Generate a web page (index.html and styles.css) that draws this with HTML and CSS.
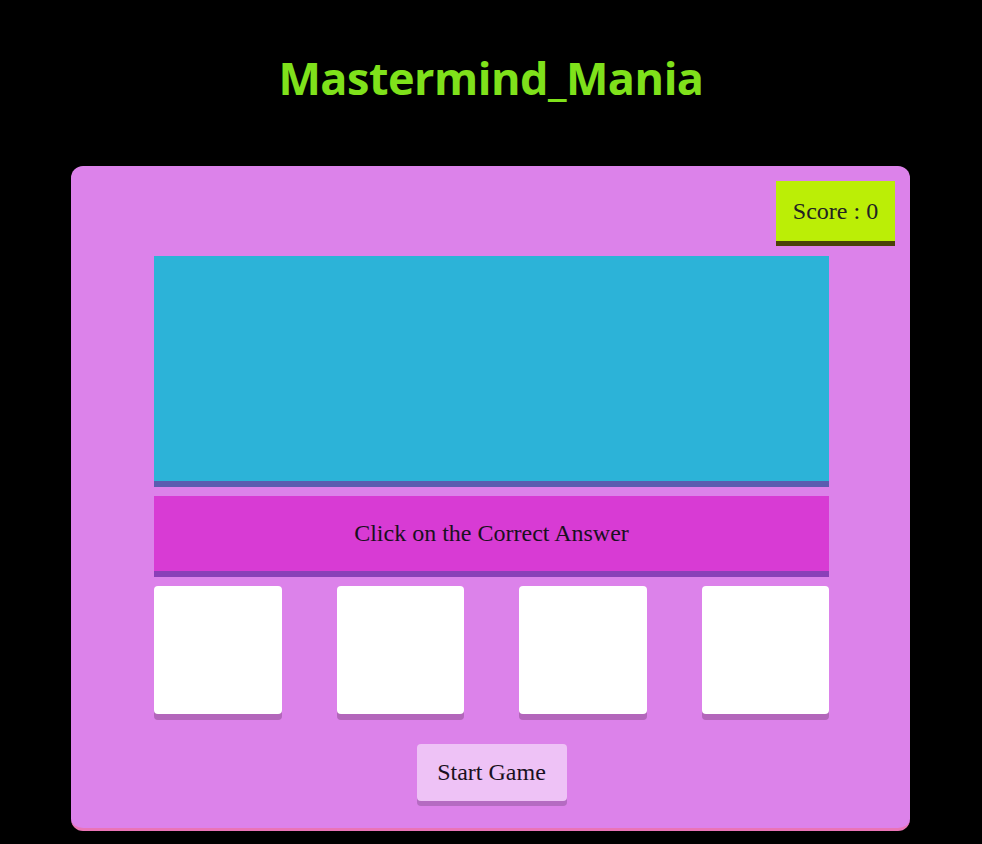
FILE: index.html
```html
<!DOCTYPE html>
<html>
<head>
<meta charset="utf-8">
<link rel="stylesheet" href="styles.css">
</head>
<body>
<h1 class="title">Mastermind_Mania</h1>
<div class="board">
  <div class="score-row"><div class="score">Score : 0</div></div>
  <div class="display"></div>
  <div class="prompt">Click on the Correct Answer</div>
  <div class="options">
    <div class="option"></div>
    <div class="option"></div>
    <div class="option"></div>
    <div class="option"></div>
  </div>
  <div class="actions"><button class="start">Start Game</button></div>
</div>
</body>
</html>
```
FILE: styles.css
```css
html, body { margin: 0; padding: 0; background: #000; }
body { font-family: "Liberation Serif", serif; height: 844px; overflow: hidden; }
.title {
  margin: 0;
  padding-top: 50px;
  height: 166px;
  box-sizing: border-box;
  text-align: center;
  font-family: "Open Sans", sans-serif;
  font-weight: 700;
  font-size: 45px;
  line-height: 56px;
  color: #7fe11b;
  letter-spacing: -0.5px;
}
.board {
  width: 839px;
  margin: 0 0 0 71px;
  box-sizing: border-box;
  background: #dc82ea;
  border-radius: 12px;
  border-bottom: 3px solid #ea74b6;
  padding: 15px 15px 22px 17px;
  height: 665px;
}
.score-row { display: flex; justify-content: flex-end; }
.score {
  background: #bbee06;
  width: 119px;
  height: 60px;
  box-sizing: border-box;
  box-shadow: 0 5px 0 #4b4108;
  display: flex; align-items: center; justify-content: center;
  font-size: 24px;
  color: #222;
}
.display {
  width: 675px;
  margin: 15px auto 0;
  height: 225px;
  background: #2cb3d8;
  border-bottom: 6px solid #5b5cb0;
}
.prompt {
  width: 675px;
  margin: 9px auto 0;
  height: 75px;
  background: #d83bd4;
  border-bottom: 6px solid #8a40b8;
  display: flex; align-items: center; justify-content: center;
  font-size: 24px;
  color: #1a1020;
}
.options {
  width: 675px;
  margin: 9px auto 0;
  display: flex;
  justify-content: space-between;
}
.option {
  width: 127.5px;
  height: 128px;
  background: #fff;
  border-radius: 4px;
  box-shadow: 0 6px 0 #b366bb;
}
.actions { display: flex; justify-content: center; margin-top: 30px; }
.start {
  width: 150px;
  height: 57px;
  background: #eec2f6;
  border: none;
  border-radius: 4px;
  box-shadow: 0 5px 0 #b56bc2;
  font-family: "Liberation Serif", serif;
  font-size: 24px;
  color: #1a1020;
  padding: 0;
}
```
